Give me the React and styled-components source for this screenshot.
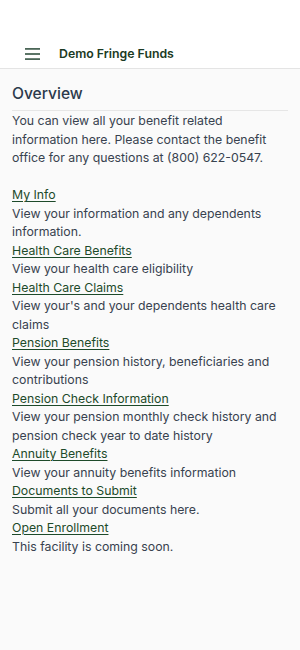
import styled, { createGlobalStyle } from "styled-components";

const GlobalStyle = createGlobalStyle`
  html, body {
    margin: 0;
    padding: 0;
    background: #fafafa;
  }
  body {
    font-family: Inter, "Noto Sans", "Liberation Sans", sans-serif;
  }
`

const Page = styled.div`
  min-height: 650px;
  background: #fafafa;
`

const Header = styled.header`
  height: 69px;
  background: #ffffff;
  border-bottom: 1px solid #e4e4e4;
  display: flex;
  align-items: flex-end;
  padding: 0 0 3px 25px;
  box-sizing: border-box;
  gap: 19px;
`

const MenuButton = styled.button`
  border: none;
  background: none;
  padding: 0;
  width: 15px;
  height: 22px;
  display: flex;
  align-items: center;
  cursor: pointer;
`

const Brand = styled.h1`
  margin: 0;
  font-size: 12.3px;
  font-weight: 600;
  color: #1b3a24;
  line-height: 22px;
`

const Main = styled.main`
  padding: 14px 12px;
`

const Heading = styled.h2`
  margin: 0;
  font-size: 15.6px;
  font-weight: 500;
  color: #2c3a4c;
  line-height: 22px;
  padding-bottom: 5px;
  border-bottom: 1px solid #e6e6e6;
`

const Body = styled.div`
  font-size: 12.3px;
  line-height: 18.5px;
  color: #38424f;
  padding-top: 1px;
`

const Intro = styled.p`
  margin: 0 0 18.5px;
`

const Item = styled.div``

const ItemLink = styled.a`
  color: #1d4a2a;
  text-decoration: underline;
  text-underline-offset: 2px;
  text-decoration-thickness: 1px;
  display: inline-block;
`

const ItemText = styled.div``

const items = [
  ["My Info", "View your information and any dependents information."],
  ["Health Care Benefits", "View your health care eligibility"],
  ["Health Care Claims", "View your's and your dependents health care claims"],
  ["Pension Benefits", "View your pension history, beneficiaries and contributions"],
  ["Pension Check Information", "View your pension monthly check history and pension check year to date history"],
  ["Annuity Benefits", "View your annuity benefits information"],
  ["Documents to Submit", "Submit all your documents here."],
  ["Open Enrollment", "This facility is coming soon."],
]

const App = () => {
  return (
    <Page>
      <GlobalStyle />
      <Header>
        <MenuButton aria-label="menu">
          <svg width="15" height="12" viewBox="0 0 15 12">
            <rect x="0" y="0" width="15" height="1.8" fill="#4b6657" />
            <rect x="0" y="5.1" width="15" height="1.8" fill="#4b6657" />
            <rect x="0" y="10.2" width="15" height="1.8" fill="#4b6657" />
          </svg>
        </MenuButton>
        <Brand>Demo Fringe Funds</Brand>
      </Header>
      <Main>
        <Heading>Overview</Heading>
        <Body>
          <Intro>
            You can view all your benefit related information here. Please contact the benefit office for any questions at (800) 622-0547.
          </Intro>
          {items.map(([title, text]) => (
            <Item key={title}>
              <ItemLink href="#">{title}</ItemLink>
              <ItemText>{text}</ItemText>
            </Item>
          ))}
        </Body>
      </Main>
    </Page>
  )
}

export default App
